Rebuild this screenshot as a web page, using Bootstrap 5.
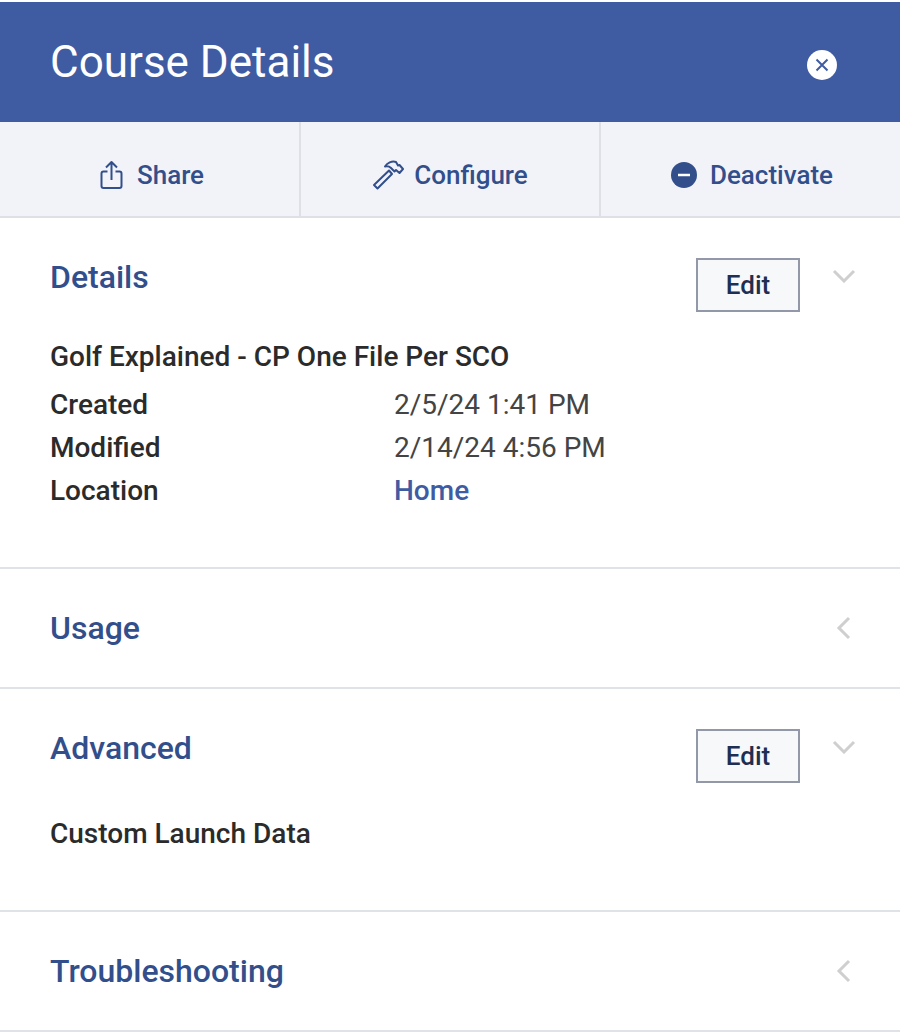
<!DOCTYPE html>
<html lang="en">
<head>
  <meta charset="UTF-8">
  <title>Course Details</title>
  <meta name="viewport" content="width=device-width, initial-scale=1">
  <link href="https://cdn.jsdelivr.net/npm/bootstrap@5.3.0/dist/css/bootstrap.min.css" rel="stylesheet">
  <style>
    body { font-family: Roboto, "Liberation Sans", sans-serif; background: #fff; padding-top: 2px; color: #2b2b2b; }
    .panel-head { height: 120px; background: #3f5ca3; padding: 0 63px 0 50px; }
    .panel-head h1 { font-size: 44px; font-weight: 400; color: #fff; margin: 0; }
    .close-btn { width: 30px; height: 30px; background: #fff; border: 0; padding: 0; margin-top: 5px; }
    .tool-bar { height: 96px; background: #f2f3f8; border-bottom: 2px solid #dfe0e6; }
    .tool-item { gap: 13px; font-size: 26px; font-weight: 500; color: #324f8c; border: 0; background: none; padding: 12px 0 0; }
    .tool-item + .tool-item { border-left: 2px solid #dfe0e6; }
    .tool-share { flex: 0 0 299px; padding-left: 5px; }
    .tool-config { flex: 0 0 300px; gap: 10px; }
    .tool-off { flex: 1 1 0; padding-left: 3px; }
    .info-block { border-bottom: 2px solid #dfe3e8; padding: 0 44px 0 50px; }
    .block-title { font-size: 32px; font-weight: 500; color: #324f8c; margin: 1px 0 0; line-height: 36px; }
    .edit-btn { width: 104px; height: 54px; font-size: 26px; font-weight: 500; color: #1d2f52; background: #f7f8f9; border: 2px solid #9398a8; border-radius: 0; padding: 0; }
    .fold-icon { width: 24px; display: block; }
    .item-name { font-size: 28px; font-weight: 500; color: #2b2b2b; line-height: 34px; }
    .meta-list { margin-top: 9px; }
    .meta-row { font-size: 28px; line-height: 43px; }
    .meta-label { width: 344px; font-weight: 500; color: #2b2b2b; }
    .meta-value { color: #444; }
    .meta-value a { color: #3f5ca3; font-weight: 500; text-decoration: none; }
    .closed-block { height: 120px; }
    .closed-block .block-title { margin: 0 0 1px; }
    .block-head { padding-top: 40px; }
    .head-tools { gap: 32px; }
    .head-tools .fold-icon { margin-top: 11px; }
    .details-block { height: 351px; }
    .details-block .item-name { margin-top: 28px; }
    .advanced-block { height: 223px; }
    .advanced-block .item-name { margin-top: 34px; }
  </style>
</head>
<body>

<!-- Encabezado -->
<div class="panel-head d-flex align-items-center justify-content-between">
  <h1>Course Details</h1>
  <button class="close-btn rounded-circle d-flex align-items-center justify-content-center" type="button" aria-label="Close">
    <svg width="14" height="14" viewBox="0 0 14 14"><path d="M1.500 1.500l11 11M12.500 1.500l-11 11" stroke="#3f5ca3" stroke-width="2" fill="none"/></svg>
  </button>
</div>

<!-- Acciones -->
<div class="tool-bar d-flex">
  <button class="tool-item tool-share d-flex align-items-center justify-content-center" type="button">
    <svg width="24" height="30" viewBox="0 0 24 30" fill="none" stroke="#324f8c" stroke-width="2" stroke-linejoin="round">
      <path d="M7.500 11.500H3.500a2 2 0 0 0-2 2v12.500a2 2 0 0 0 2 2h16a2 2 0 0 0 2-2V13.500a2 2 0 0 0-2-2h-4"/>
      <path d="M11.500 20V2.500M6 7.500l5.500-5.500 5.500 5.500"/>
    </svg>
    Share
  </button>
  <button class="tool-item tool-config d-flex align-items-center justify-content-center" type="button">
    <svg width="32" height="30" viewBox="0 0 32 30" fill="none" stroke="#324f8c" stroke-width="2" stroke-linejoin="round">
      <path d="M17 10.500L2 25l3.500 3.500L20 14z"/>
      <path d="M13 6.500C15 3 20 0.500 24 2l2 3.500 1.500-.5L31 9l-3.500 4-3.500-3-1.500 1.500-3.500-3.500c-1.500-1.500-3.500-2-6-1.500z"/>
    </svg>
    Configure
  </button>
  <button class="tool-item tool-off d-flex align-items-center justify-content-center" type="button">
    <svg width="26" height="26" viewBox="0 0 26 26"><circle cx="13" cy="13" r="13" fill="#324f8c"/><path d="M7 13h12" stroke="#fff" stroke-width="2.500"/></svg>
    Deactivate
  </button>
</div>

<!-- Details -->
<section class="info-block details-block">
  <div class="d-flex justify-content-between align-items-start block-head">
    <h2 class="block-title">Details</h2>
    <div class="d-flex align-items-start head-tools">
      <button class="edit-btn" type="button">Edit</button>
      <svg class="fold-icon" viewBox="0 0 24 14" height="14" fill="none" stroke="#cfcfcf" stroke-width="3"><path d="M2 2l10 10 10-10"/></svg>
    </div>
  </div>
  <div class="item-name">Golf Explained - CP One File Per SCO</div>
  <div class="meta-list">
    <div class="d-flex meta-row"><div class="meta-label">Created</div><div class="meta-value">2/5/24 1:41 PM</div></div>
    <div class="d-flex meta-row"><div class="meta-label">Modified</div><div class="meta-value">2/14/24 4:56 PM</div></div>
    <div class="d-flex meta-row"><div class="meta-label">Location</div><div class="meta-value"><a href="#">Home</a></div></div>
  </div>
</section>

<!-- Usage -->
<section class="info-block d-flex align-items-center justify-content-between closed-block">
  <h2 class="block-title">Usage</h2>
  <svg class="fold-icon" viewBox="0 0 24 24" height="24" fill="none" stroke="#cfcfcf" stroke-width="3"><path d="M17 2L7 12l10 10"/></svg>
</section>

<!-- Advanced -->
<section class="info-block advanced-block">
  <div class="d-flex justify-content-between align-items-start block-head">
    <h2 class="block-title">Advanced</h2>
    <div class="d-flex align-items-start head-tools">
      <button class="edit-btn" type="button">Edit</button>
      <svg class="fold-icon" viewBox="0 0 24 14" height="14" fill="none" stroke="#cfcfcf" stroke-width="3"><path d="M2 2l10 10 10-10"/></svg>
    </div>
  </div>
  <div class="item-name">Custom Launch Data</div>
</section>

<!-- Troubleshooting -->
<section class="info-block d-flex align-items-center justify-content-between closed-block">
  <h2 class="block-title">Troubleshooting</h2>
  <svg class="fold-icon" viewBox="0 0 24 24" height="24" fill="none" stroke="#cfcfcf" stroke-width="3"><path d="M17 2L7 12l10 10"/></svg>
</section>

<script src="https://cdn.jsdelivr.net/npm/bootstrap@5.3.0/dist/js/bootstrap.bundle.min.js"></script>
</body>
</html>
